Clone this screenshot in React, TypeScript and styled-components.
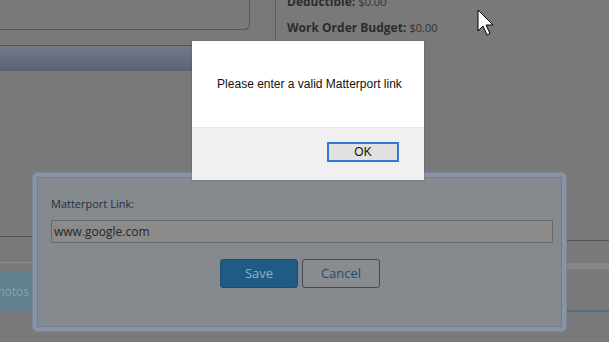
import React from 'react'
import styled, { createGlobalStyle } from 'styled-components'

const Global = createGlobalStyle`
  html, body {
    margin: 0;
    padding: 0;
    background: #797979;
    overflow: hidden;
  }
`

const Page = styled.div`
  position: relative;
  width: 609px;
  height: 342px;
  background: #797979;
  overflow: hidden;
  font-family: 'Open Sans', 'Liberation Sans', sans-serif;
`

const TopRow = styled.div`
  display: flex;
  align-items: flex-start;
  height: 71px;
`

const LeftCol = styled.div`
  width: 275px;
  display: flex;
  flex-direction: column;
`

const SummaryPanel = styled.div`
  width: 250px;
  height: 30px;
  box-sizing: border-box;
  border-right: 1px solid #4f5668;
  border-bottom: 1px solid #4f5668;
  border-radius: 0 0 6px 0;
`

const SectionBar = styled.div`
  width: 265px;
  height: 25px;
  margin-top: 15px;
  border-top: 1px solid #4c5062;
  background: linear-gradient(#767985, #5a6278);
`

const InfoCol = styled.div`
  height: 46px;
  border-left: 1px solid #565c6c;
  padding-left: 11px;
  display: flex;
  flex-direction: column;
  gap: 8px;
  margin-top: -7px;
`

const InfoLine = styled.div`
  font-family: 'Open Sans', 'Liberation Sans', sans-serif;
  font-size: 12px;
  line-height: 18px;
  color: #2c2c2c;
  white-space: nowrap;

  b {
    font-weight: 700;
  }
`

const Value = styled.span`
  font-size: 11px;
  color: #333;
`

const BottomArea = styled.div`
  display: flex;
  justify-content: space-between;
`

const TabsBlock = styled.div`
  width: 40px;
  margin-top: 165px;
  border-top: 1px solid #54565c;
  display: flex;
  flex-direction: column;
`

const TabsRule = styled.div`
  height: 25px;
  border-bottom: 1px solid #8b8e92;
`

const TabButton = styled.div`
  margin-top: 9px;
  height: 39px;
  background: #62808f;
  color: #8aa2b2;
  font-size: 12px;
  line-height: 39px;
  text-align: right;
  overflow: hidden;
  white-space: nowrap;
  direction: rtl;
  padding-right: 11px;
`

const SideBlock = styled.div`
  width: 50px;
  margin-top: 169px;
  border-top: 1px solid #51545e;
  display: flex;
  flex-direction: column;
`

const SideBand = styled.div`
  margin-top: 22px;
  height: 6px;
  background: #85878b;
`

const SideLine = styled.div`
  margin-top: 41px;
  height: 2px;
  background: #4f6c86;
`

const LinkDialog = styled.div`
  position: absolute;
  left: 32px;
  top: 172px;
  width: 535px;
  height: 160px;
  box-sizing: border-box;
  padding: 4px;
  border: 1px solid #7b869a;
  border-radius: 5px;
  background: #8a94a6;
  display: flex;
`

const DialogBody = styled.div`
  flex: 1;
  border: 1px solid #737c8b;
  background: #858a8f;
  padding: 18px 8px 0 13px;
  display: flex;
  flex-direction: column;
`

const FieldLabel = styled.label`
  font-size: 11px;
  line-height: 16px;
  color: #262f3a;
`

const LinkInput = styled.div`
  margin-top: 8px;
  height: 23px;
  box-sizing: border-box;
  border: 1px solid #676a6c;
  background: #8c8b89;
  color: #22282e;
  font-size: 12px;
  line-height: 21px;
  padding-left: 2px;
`

const ButtonRow = styled.div`
  margin-top: 16px;
  display: flex;
  justify-content: center;
  gap: 4px;
  padding-right: 4px;
`

const DialogButton = styled.div<{ $primary?: boolean }>`
  width: 78px;
  height: 29px;
  box-sizing: border-box;
  border-radius: 3px;
  border: 1px solid ${(p) => (p.$primary ? '#1d4f72' : '#3f4b56')};
  background: ${(p) => (p.$primary ? '#1f5b84' : '#888c90')};
  color: ${(p) => (p.$primary ? '#8fb2ca' : '#2c4a62')};
  font-size: 13px;
  line-height: 27px;
  text-align: center;
`

const Alert = styled.div`
  position: absolute;
  left: 192px;
  top: 41px;
  width: 232px;
  height: 139px;
  background: #ffffff;
  display: flex;
  flex-direction: column;
  box-shadow: 0 0 1px rgba(0, 0, 0, 0.35);
`

const AlertMessage = styled.div`
  height: 86px;
  box-sizing: border-box;
  padding-top: 36px;
  padding-left: 3px;
  text-align: center;
  font-family: 'Liberation Sans', Arial, sans-serif;
  font-size: 12px;
  color: #111;
`

const AlertFooter = styled.div`
  flex: 1;
  background: #f0f0f0;
  border-top: 1px solid #e6e6e6;
  display: flex;
  justify-content: flex-end;
  align-items: flex-start;
  padding: 14px 25px 0 0;
`

const OkButton = styled.div`
  width: 72px;
  height: 20px;
  box-sizing: border-box;
  border: 2px solid #2e7ad6;
  background: #e1e1e1;
  font-family: 'Liberation Sans', Arial, sans-serif;
  font-size: 12px;
  line-height: 16px;
  text-align: center;
  color: #111;
`

const Cursor = styled.svg`
  position: absolute;
  left: 477px;
  top: 9px;
`

export default function App() {
  return (
    <Page>
      <Global />
      <TopRow>
        <LeftCol>
          <SummaryPanel />
          <SectionBar />
        </LeftCol>
        <InfoCol>
          <InfoLine>
            <b>Deductible:</b> <Value>$0.00</Value>
          </InfoLine>
          <InfoLine>
            <b>Work Order Budget:</b> <Value>$0.00</Value>
          </InfoLine>
        </InfoCol>
      </TopRow>
      <BottomArea>
        <TabsBlock>
          <TabsRule />
          <TabButton>Photos</TabButton>
        </TabsBlock>
        <SideBlock>
          <SideBand />
          <SideLine />
        </SideBlock>
      </BottomArea>

      <LinkDialog>
        <DialogBody>
          <FieldLabel>Matterport Link:</FieldLabel>
          <LinkInput>www.google.com</LinkInput>
          <ButtonRow>
            <DialogButton $primary>Save</DialogButton>
            <DialogButton>Cancel</DialogButton>
          </ButtonRow>
        </DialogBody>
      </LinkDialog>

      <Cursor width="20" height="28" viewBox="0 0 20 28">
        <path
          d="M1 1 L1 22 L6 17 L10 26 L13 24.5 L9 16 L16 16 Z"
          fill="#ffffff"
          stroke="#000000"
          strokeWidth="1"
          strokeLinejoin="round"
        />
      </Cursor>

      <Alert>
        <AlertMessage>Please enter a valid Matterport link</AlertMessage>
        <AlertFooter>
          <OkButton>OK</OkButton>
        </AlertFooter>
      </Alert>
    </Page>
  )
}
